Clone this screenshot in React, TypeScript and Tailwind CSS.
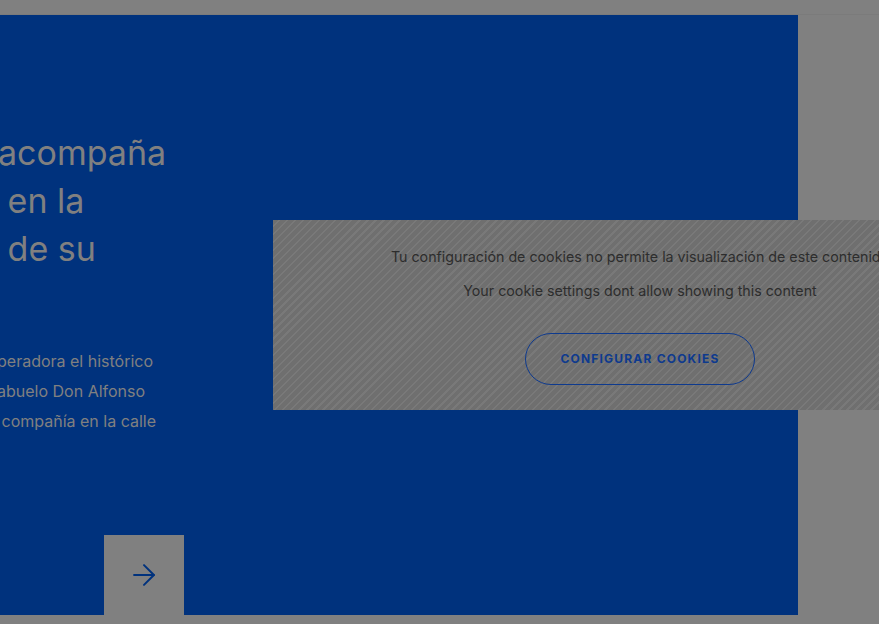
import { ArrowRight } from "lucide-react";

export default function App() {
  return (
    <div className="relative h-[624px] w-[879px] overflow-hidden bg-[#808080] font-['Inter',sans-serif]">
      <div className="h-[15px] border-b border-[#7b7b7b]" />
      <div className="flex">
        <section className="relative flex h-[600px] w-[798px] flex-col bg-[#00327d]">
          <h2 className="ml-[-2px] mt-[114px] text-[34px] leading-[48px] text-[#808080]">
            <span className="block">acompaña</span>
            <span className="block">&nbsp;en la</span>
            <span className="block">&nbsp;de su</span>
          </h2>
          <p className="ml-[-3px] mt-[73px] text-[16px] leading-[30px] text-[#808080]">
            <span className="block">peradora el histórico</span>
            <span className="block">abuelo Don Alfonso</span>
            <span className="block">&nbsp;compañía en la calle</span>
          </p>
          <div className="mt-auto ml-[104px] flex h-[80px] w-[80px] items-center justify-center bg-[#808080]">
            <ArrowRight className="h-[34px] w-[34px] text-[#00327d]" strokeWidth={1.4} />
          </div>
        </section>
      </div>

      <div className="absolute left-[273px] top-[220px] flex h-[190px] w-[734px] flex-col items-center bg-[repeating-linear-gradient(-45deg,#6f6f6f_0px,#6f6f6f_4px,#797979_4px,#797979_5.7px)] text-[#2d2d2d]">
        <p className="mt-[27px] text-[14.25px] leading-[20px]">
          Tu configuración de cookies no permite la visualización de este contenido
        </p>
        <p className="mt-[14px] text-[14.25px] leading-[20px]">
          Your cookie settings dont allow showing this content
        </p>
        <button className="mt-[32px] flex h-[52px] w-[230px] items-center justify-center rounded-full border border-[#0e3a8e] text-[12px] font-bold tracking-[0.1em] text-[#0e3a8e]">
          CONFIGURAR COOKIES
        </button>
      </div>
    </div>
  );
}
